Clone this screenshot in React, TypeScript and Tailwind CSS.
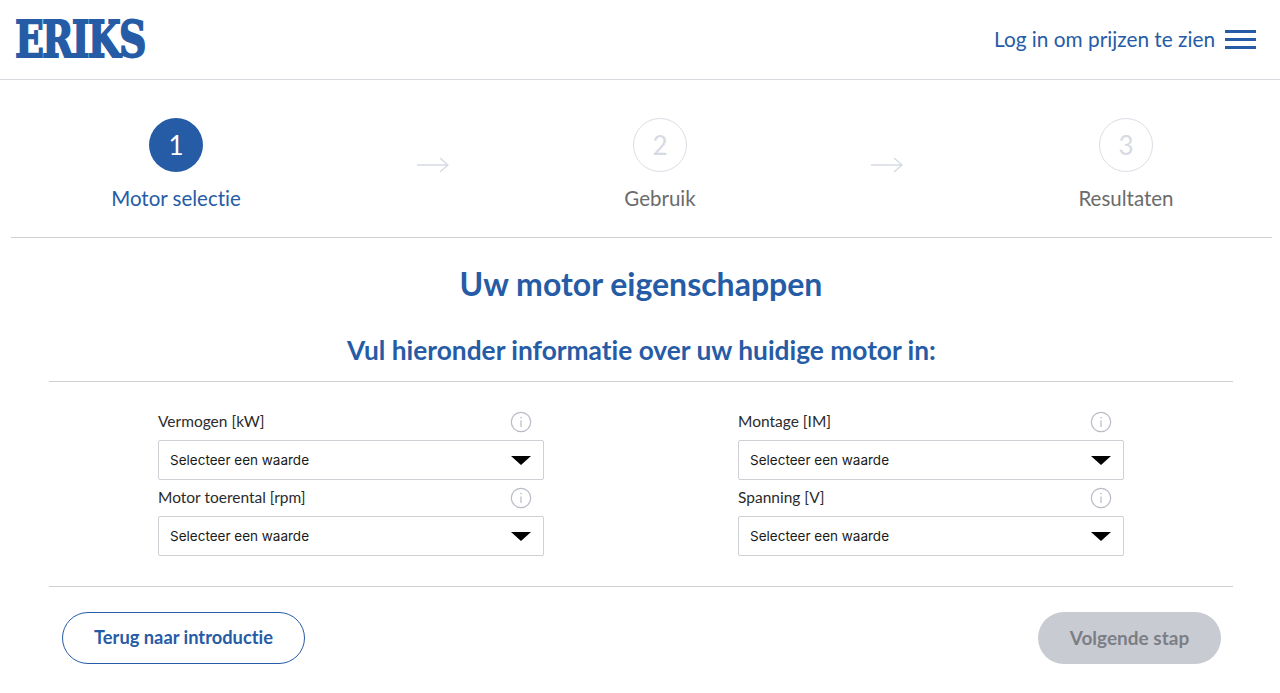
const blue = "text-[#265ca6]";

function Step({ n, label, active }: { n: number; label: string; active?: boolean }) {
  return (
    <div className="flex w-[130px] flex-col items-center">
      <div
        className={
          active
            ? "flex h-[54px] w-[54px] items-center justify-center rounded-full bg-[#265ca6] text-[26px] text-white"
            : "flex h-[54px] w-[54px] items-center justify-center rounded-full border-[1.5px] border-[#dcdde5] text-[26px] text-[#d8dae3]"
        }
      >
        {n}
      </div>
      <div className={active ? "mt-[13px] whitespace-nowrap text-[20.5px] leading-[26px] text-[#265ca6]" : "mt-[13px] whitespace-nowrap text-[20.5px] leading-[26px] text-[#6b6b6b]"}>
        {label}
      </div>
    </div>
  );
}

function Arrow({ className }: { className: string }) {
  return (
    <svg className={className} width="32" height="16" viewBox="0 0 32 16" fill="none" stroke="#d8dae3" strokeWidth="1.4">
      <path d="M0 8H31M23 1l8 7-8 7" />
    </svg>
  );
}

function Field({ label }: { label: string }) {
  return (
    <div className="w-[386px]">
      <div className="flex h-[24px] items-center justify-between pt-[1px]">
        <span className="text-[15.5px] text-[#2b2b2b]">{label}</span>
        <svg className="mr-[12px]" width="22" height="22" viewBox="0 0 22 22" fill="none">
          <circle cx="11" cy="11" r="9.7" stroke="#b9bbc6" strokeWidth="1.2" />
          <path d="M11 9.5V16" stroke="#b9bbc6" strokeWidth="1.2" />
          <circle cx="11" cy="6.6" r="0.8" fill="#b9bbc6" />
        </svg>
      </div>
      <div className="mt-[7px] flex h-[40px] items-center justify-between rounded-[2px] border border-[#cfd0d6] pl-[11px] pr-[12px] font-['Inter',sans-serif] text-[13.5px] text-[#1a1a1a]">
        <span>Selecteer een waarde</span>
        <span className="h-0 w-0 border-x-[10px] border-t-[9px] border-x-transparent border-t-black" />
      </div>
    </div>
  );
}

export default function App() {
  return (
    <div className="h-[693px] w-[1280px] overflow-hidden bg-white font-['Lato',sans-serif] [font-variant-ligatures:none]">
      <header className="flex h-[80px] items-center justify-between border-b border-[#d8d8df] pl-[15px] pr-[24px]">
        <span className="inline-block origin-left scale-x-[0.745] font-['DejaVu_Serif',serif] text-[51px] font-bold leading-none tracking-[-2.5px] text-[#265ca6] [-webkit-text-stroke:1.8px_#265ca6]">
          ERIKS
        </span>
        <div className="flex items-center">
          <span className={`mb-[2px] text-[20.8px] ${blue}`}>Log in om prijzen te zien</span>
          <div className="ml-[10px] flex w-[31px] flex-col gap-[5px] pb-[1px]">
            <div className="h-[3px] bg-[#265ca6]" />
            <div className="h-[3px] bg-[#265ca6]" />
            <div className="h-[3px] bg-[#265ca6]" />
          </div>
        </div>
      </header>

      <section className="ml-[11px] mr-[8px] flex h-[158px] border-b border-[#d0d1d6] pl-[100px] pt-[38px]">
        <Step n={1} label="Motor selectie" active />
        <Arrow className="ml-[176px] mt-[39px]" />
        <div className="ml-[146px]"><Step n={2} label="Gebruik" /></div>
        <Arrow className="ml-[146px] mt-[39px]" />
        <div className="ml-[158px]"><Step n={3} label="Resultaten" /></div>
      </section>

      <h1 className={`mt-[27px] pl-[2px] text-center text-[32px] font-bold leading-[38px] ${blue}`}>Uw motor eigenschappen</h1>
      <h2 className={`mt-[31px] pl-[3px] text-center text-[26.3px] font-bold leading-[32px] ${blue}`}>Vul hieronder informatie over uw huidige motor in:</h2>

      <section className="ml-[49px] mr-[47px] mt-[15px] h-[206px] border-y border-[#cfd0d6] pt-[27px]">
        <div className="ml-[109px] grid w-[966px] grid-cols-[386px_386px] justify-between gap-y-[5px]">
          <Field label="Vermogen [kW]" />
          <Field label="Montage [IM]" />
          <Field label="Motor toerental [rpm]" />
          <Field label="Spanning [V]" />
        </div>
      </section>

      <div className="mt-[25px] flex justify-between pl-[62px] pr-[59px]">
        <button className={`h-[52px] w-[243px] rounded-full border-[1.5px] border-[#265ca6] text-[18.3px] font-bold ${blue}`}>
          Terug naar introductie
        </button>
        <button className="h-[52px] w-[183px] rounded-full bg-[#c9cbd3] text-[19px] font-bold text-[#7c7e85]">
          Volgende stap
        </button>
      </div>
    </div>
  );
}
